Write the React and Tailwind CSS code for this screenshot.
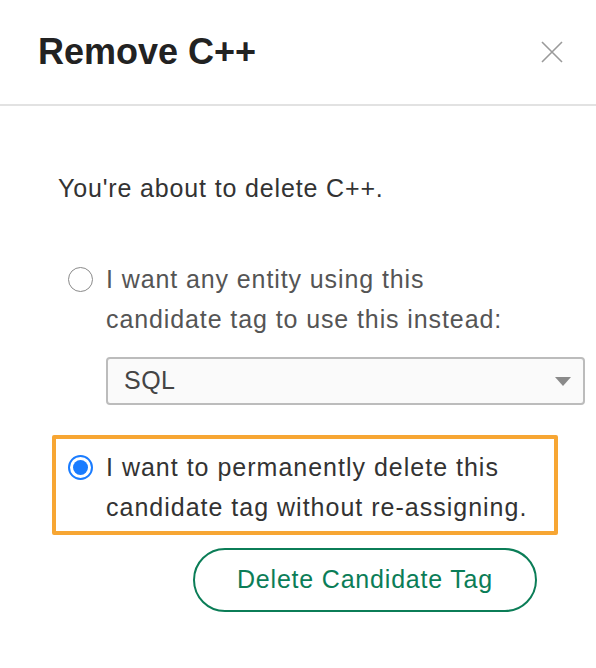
import React, { useState } from "react";

const FONT = { fontFamily: '"Liberation Sans", Arial, sans-serif' };

function Radio({ checked }) {
  if (checked) {
    return (
      <span className="flex h-[25px] w-[25px] shrink-0 items-center justify-center rounded-full border-2 border-[#1a7cff] bg-white">
        <span className="h-[15px] w-[15px] rounded-full bg-[#1a7cff]" />
      </span>
    );
  }
  return (
    <span className="h-[25px] w-[25px] shrink-0 rounded-full border-[1.5px] border-[#8a8a8a] bg-white" />
  );
}

export default function App() {
  const [choice, setChoice] = useState("delete");

  return (
    <div className="h-[668px] w-[596px] bg-white text-[#333]" style={FONT}>
      {/* Header */}
      <div className="flex h-[106px] items-center justify-between border-b-2 border-[#e2e2e2] pl-[38px] pr-[33px]">
        <h1 className="text-[36px] font-bold leading-none text-[#222]">Remove C++</h1>
        <button className="text-[#9a9a9a]" aria-label="Close">
          <svg width="22" height="22" viewBox="0 0 22 22" fill="none" stroke="currentColor" strokeWidth="1.6">
            <path d="M1 1 L21 21 M21 1 L1 21" />
          </svg>
        </button>
      </div>

      {/* Body */}
      <div className="pl-[58px] pt-[62px]">
        <p className="text-[25px] leading-[40px] tracking-[0.85px] text-[#333]">You're about to delete C++.</p>

        <div className="mt-[51px] flex items-start gap-[13px] pl-[10px]" onClick={() => setChoice("replace")}>
          <div className="flex h-[40px] items-center">
            <Radio checked={choice === "replace"} />
          </div>
          <p className="text-[25px] leading-[40px] tracking-[0.9px] text-[#555]">
            I want any entity using this
            <br />
            candidate tag to use this instead:
          </p>
        </div>

        <div className="ml-[48px] mt-[18px] flex h-[48px] w-[479px] items-center justify-between rounded-[4px] border-2 border-[#bcbcbc] bg-[#fafafa] pl-[16px] pr-[12px]">
          <span className="text-[25px] tracking-[0.5px] text-[#444]">SQL</span>
          <svg width="16" height="9" viewBox="0 0 16 9">
            <path d="M0 0 H16 L8 9 Z" fill="#8a8a8a" />
          </svg>
        </div>

        <div
          className="ml-[-6px] mt-[30px] flex w-[506px] items-start gap-[13px] rounded-[2px] border-4 border-[#f7a633] pb-[4px] pl-[12px] pt-[8px]"
          onClick={() => setChoice("delete")}
        >
          <div className="flex h-[40px] items-center">
            <Radio checked={choice === "delete"} />
          </div>
          <p className="whitespace-nowrap text-[25px] leading-[40px] tracking-[1px] text-[#333]">
            I want to permanently delete this
            <br />
            candidate tag without re-assigning.
          </p>
        </div>

        <button className="ml-[135px] mt-[13px] flex h-[64px] w-[344px] items-center justify-center rounded-full border-2 border-[#0b7d57] text-[25px] tracking-[0.8px] text-[#0b7d57]">
          Delete Candidate Tag
        </button>
      </div>
    </div>
  );
}
